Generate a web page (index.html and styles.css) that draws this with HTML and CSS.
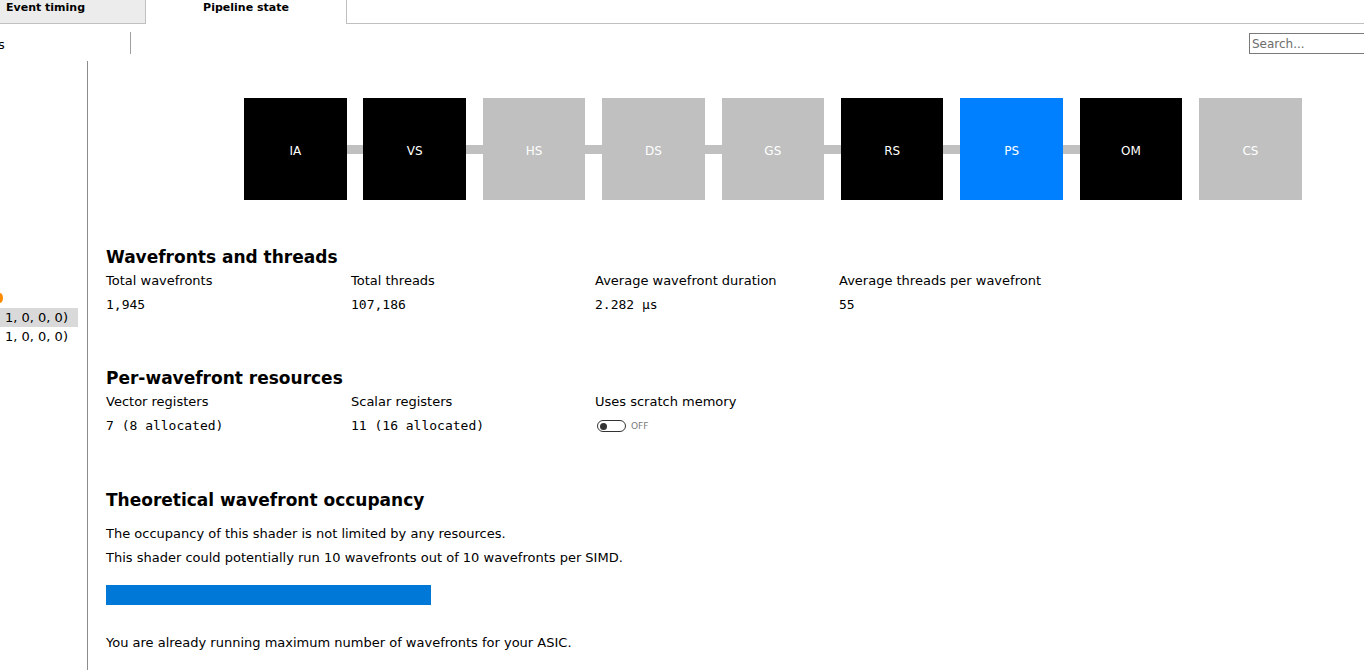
FILE: index.html
```html
<!DOCTYPE html>
<html>
<head>
<meta charset="utf-8">
<link rel="stylesheet" href="styles.css">
</head>
<body>
<div class="tabbar">
  <div class="tab">Event timing</div>
  <div class="tab active">Pipeline state</div>
  <div class="tab-rest"></div>
</div>
<div class="toolbar">
  <div class="tool-left">s</div>
  <div class="tool-sep"></div>
  <div class="tool-spacer"></div>
  <input class="search" type="text" placeholder="Search...">
</div>
<div class="main">
  <div class="side">
    <div class="side-dot"></div>
    <div class="side-row selected">1, 0, 0, 0)</div>
    <div class="side-row">1, 0, 0, 0)</div>
  </div>
  <div class="content">
    <div class="pipeline">
      <div class="stage on">IA</div>
      <div class="link"></div>
      <div class="stage on">VS</div>
      <div class="link"></div>
      <div class="stage off">HS</div>
      <div class="link"></div>
      <div class="stage off">DS</div>
      <div class="link"></div>
      <div class="stage off">GS</div>
      <div class="link"></div>
      <div class="stage on">RS</div>
      <div class="link"></div>
      <div class="stage sel">PS</div>
      <div class="link"></div>
      <div class="stage on">OM</div>
      <div class="spacer"></div>
      <div class="stage off">CS</div>
    </div>

    <div class="section s1">
      <h2>Wavefronts and threads</h2>
      <div class="grid">
        <div class="cell"><div class="label">Total wavefronts</div><div class="value">1,945</div></div>
        <div class="cell"><div class="label">Total threads</div><div class="value">107,186</div></div>
        <div class="cell"><div class="label">Average wavefront duration</div><div class="value">2.282 µs</div></div>
        <div class="cell"><div class="label">Average threads per wavefront</div><div class="value">55</div></div>
      </div>
    </div>

    <div class="section s2">
      <h2>Per-wavefront resources</h2>
      <div class="grid">
        <div class="cell"><div class="label">Vector registers</div><div class="value">7 (8 allocated)</div></div>
        <div class="cell"><div class="label">Scalar registers</div><div class="value">11 (16 allocated)</div></div>
        <div class="cell"><div class="label">Uses scratch memory</div>
          <div class="toggle-row"><span class="toggle"><span class="knob"></span></span><span class="toggle-text">OFF</span></div>
        </div>
      </div>
    </div>

    <div class="section s3">
      <h2>Theoretical wavefront occupancy</h2>
      <p class="line first">The occupancy of this shader is not limited by any resources.</p>
      <p class="line">This shader could potentially run 10 wavefronts out of 10 wavefronts per SIMD.</p>
      <div class="bar"></div>
      <p class="line last">You are already running maximum number of wavefronts for your ASIC.</p>
    </div>
  </div>
</div>
</body>
</html>
```
FILE: styles.css
```css
html, body {
  margin: 0;
  padding: 0;
  background: #ffffff;
  overflow: hidden;
}
body {
  width: 1364px;
  height: 670px;
  font-family: "DejaVu Sans", sans-serif;
  color: #000;
}
.tabbar {
  display: flex;
  height: 24px;
  margin-left: -54px;
}
.tab {
  width: 200px;
  box-sizing: border-box;
  height: 24px;
  background: #ececec;
  border-right: 1px solid #c0c0c0;
  border-bottom: 1px solid #c0c0c0;
  font-family: "DejaVu Sans", sans-serif;
  font-weight: bold;
  font-size: 11px;
  text-align: center;
  line-height: 15px;
}
.tab.active {
  background: #fff;
  border-bottom: none;
  width: 201px;
}
.tab-rest {
  flex: 1;
  border-bottom: 1px solid #c0c0c0;
}
.toolbar {
  display: flex;
  align-items: center;
  height: 37px;
}
.tool-left {
  width: 128px;
  font-family: "DejaVu Sans", sans-serif;
  font-size: 13px;
  margin-left: -2px;
  padding-top: 4px;
}
.tool-sep {
  width: 1px;
  height: 22px;
  background: #a0a0a0;
  margin-left: 4px;
}
.tool-spacer { flex: 1; }
.search {
  width: 130px;
  height: 21px;
  box-sizing: border-box;
  border: 1px solid #7a7a7a;
  margin: 2px -15px 0 0;
  padding: 0 2px;
  font-family: "DejaVu Sans", sans-serif;
  font-size: 12px;
  outline: none;
}
.search::placeholder { color: #6d6d6d; }

.main {
  display: flex;
  height: 609px;
}
.side {
  width: 87px;
  border-right: 1px solid #8c8c8c;
  padding-top: 232px;
  font-family: "DejaVu Sans", sans-serif;
  font-size: 13px;
}
.side-dot {
  width: 6px;
  height: 10px;
  margin-left: -3px;
  background: #ff8c00;
  border-radius: 50%;
  margin-bottom: 5px;
}
.side-row {
  width: 78px;
  height: 19px;
  line-height: 19px;
  padding-left: 5px;
  box-sizing: border-box;
  white-space: nowrap;
}
.side-row.selected { background: #d9d9d9; }

.content {
  flex: 1;
  padding-left: 18px;
}
.pipeline {
  display: flex;
  align-items: center;
  margin: 37px 0 0 138px;
  height: 102px;
}
.stage {
  width: 102.5px;
  height: 102px;
  flex: none;
  display: flex;
  align-items: center;
  justify-content: center;
  padding-top: 3px;
  box-sizing: border-box;
  color: #fff;
  font-family: "DejaVu Sans", sans-serif;
  font-size: 12px;
}
.stage.on { background: #000; }
.stage.off { background: #c0c0c0; }
.stage.sel { background: #0080ff; }
.link {
  width: 16.9px;
  height: 9px;
  background: #c0c0c0;
  flex: none;
}
.spacer { width: 16.9px; flex: none; }

.section h2 {
  margin: 0;
  font-family: "DejaVu Sans", sans-serif;
  font-weight: bold;
  font-size: 17px;
  line-height: 24px;
}
.s1 { margin-top: 45px; }
.s2 { margin-top: 49px; }
.s3 { margin-top: 50px; }
.grid {
  display: grid;
  grid-template-columns: 245px 244px 244px 244px;
}
.label {
  font-family: "DejaVu Sans", sans-serif;
  font-size: 13px;
  line-height: 24px;
}
.value {
  font-family: "DejaVu Sans Mono", monospace;
  font-size: 13px;
  line-height: 24px;
}
.toggle-row {
  display: flex;
  align-items: center;
  height: 24px;
}
.toggle {
  width: 25px;
  height: 10px;
  border: 1.5px solid #333;
  border-radius: 8px;
  display: flex;
  align-items: center;
  padding-left: 2px;
  margin-left: 2px;
}
.knob {
  width: 7px;
  height: 7px;
  border-radius: 50%;
  background: #333;
}
.toggle-text {
  font-family: "DejaVu Sans", sans-serif;
  font-size: 9px;
  color: #7a7a7a;
  margin-left: 5px;
}
.line {
  margin: 0;
  font-family: "DejaVu Sans", sans-serif;
  font-size: 13px;
  line-height: 24px;
}
.line.first { margin-top: 10px; }
.bar {
  width: 325px;
  height: 20px;
  background: #0078d7;
  margin-top: 15px;
}
.line.last { margin-top: 26px; }
```
